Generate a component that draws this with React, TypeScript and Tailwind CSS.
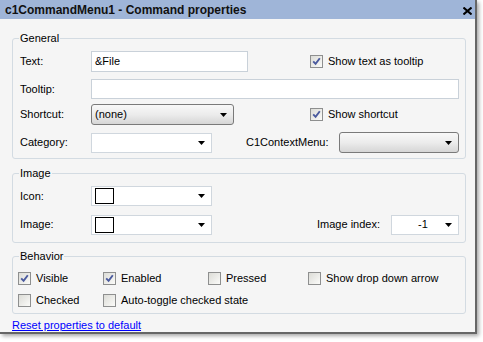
import React from 'react'

function Arrow() {
  return (
    <svg width="7" height="4" viewBox="0 0 7 4" className="shrink-0">
      <path d="M0 0h7L3.5 4z" fill="#000" />
    </svg>
  )
}

function Check({ checked }: { checked?: boolean }) {
  return (
    <span className="w-[13px] h-[13px] border border-[#8e8f8f] bg-gradient-to-br from-[#dcdcd7] to-[#fbfbf9] flex items-center justify-center shrink-0">
      {checked && (
        <svg width="9" height="9" viewBox="0 0 9 9">
          <path d="M1.2 4.3L3.6 6.8L7.8 1.2" stroke="#4a5a9e" strokeWidth="1.9" fill="none" />
        </svg>
      )}
    </span>
  )
}

function CheckLabel({ checked, label, className = '' }: { checked?: boolean; label: string; className?: string }) {
  return (
    <div className={`flex items-center gap-[5px] shrink-0 ${className}`}>
      <Check checked={checked} />
      <span>{label}</span>
    </div>
  )
}

function Combo({ w, children }: { w: string; children?: React.ReactNode }) {
  return (
    <div className={`${w} h-[20px] border border-[#d0d7de] bg-white flex items-center pl-[3px] pr-[6px] shrink-0`}>
      <div className="flex-1 flex items-center">{children}</div>
      <Arrow />
    </div>
  )
}

function Select({ w, children }: { w: string; children?: React.ReactNode }) {
  return (
    <div className={`${w} h-[21px] border border-[#7a7a7a] rounded-[3px] bg-gradient-to-b from-[#f8f8f8] via-[#ececec] to-[#d6d6d6] flex items-center pl-[3px] pr-[6px] shrink-0`}>
      <div className="flex-1">{children}</div>
      <Arrow />
    </div>
  )
}

function Swatch() {
  return <span className="w-[19px] h-[16px] border border-black bg-white block" />
}

function Label({ children }: { children: React.ReactNode }) {
  return <span className="w-[71px] shrink-0">{children}</span>
}

export default function App() {
  return (
    <div className="font-['Liberation_Sans',Arial,sans-serif] text-[11px] leading-[13px] text-black bg-white w-[483px] h-[342px]">
      <div className="w-[477px] h-[334px] bg-[#f5f5f5] border-r-2 border-b-2 border-[#666666] shadow-[2px_2px_4px_rgba(0,0,0,0.35)] flex flex-col">
        {/* title bar */}
        <div className="h-[20px] bg-[#9fb5d8] flex items-center pl-[5px] pr-[3px] pt-[2px]">
          <span className="flex-1 font-bold text-[12px] text-[#111]">c1CommandMenu1 - Command properties</span>
          <svg width="9" height="8" viewBox="0 0 9 8">
            <path d="M0.5 0.5L8.5 7.5M8.5 0.5L0.5 7.5" stroke="#000" strokeWidth="2" />
          </svg>
        </div>

        <div className="pl-[12px] flex flex-col">
          {/* General */}
          <fieldset className="mt-[13px] w-[454px] border border-[#d3dbe2] rounded-[3px] pl-[7px] pb-[5px]">
            <legend className="px-[1px] -ml-[1px]">General</legend>
            <div className="mt-[6px] h-[21px] flex items-center">
              <Label>Text:</Label>
              <div className="w-[157px] h-[21px] border border-[#c9d1d9] bg-white flex items-center px-[3px]">&amp;File</div>
              <CheckLabel checked label="Show text as tooltip" className="ml-[62px]" />
            </div>
            <div className="mt-[7px] h-[20px] flex items-center">
              <Label>Tooltip:</Label>
              <div className="w-[368px] h-[20px] border border-[#c9d1d9] bg-white" />
            </div>
            <div className="mt-[5px] h-[21px] flex items-center">
              <Label>Shortcut:</Label>
              <Select w="w-[143px]">(none)</Select>
              <CheckLabel checked label="Show shortcut" className="ml-[76px]" />
            </div>
            <div className="mt-[7px] h-[21px] flex items-center">
              <Label>Category:</Label>
              <Combo w="w-[121px]" />
              <span className="ml-[34px] w-[93px]">C1ContextMenu:</span>
              <Select w="w-[120px]" />
            </div>
          </fieldset>

          {/* Image */}
          <fieldset className="mt-[8px] w-[454px] border border-[#d3dbe2] rounded-[3px] pl-[7px] pb-[7px]">
            <legend className="px-[1px] -ml-[1px]">Image</legend>
            <div className="mt-[6px] h-[20px] flex items-center">
              <Label>Icon:</Label>
              <Combo w="w-[121px]"><Swatch /></Combo>
            </div>
            <div className="mt-[8px] h-[21px] flex items-center">
              <Label>Image:</Label>
              <Combo w="w-[121px]"><Swatch /></Combo>
              <span className="ml-[105px] w-[74px]">Image index:</span>
              <Combo w="w-[68px]"><span className="w-full text-center pl-[6px]">-1</span></Combo>
            </div>
          </fieldset>

          {/* Behavior */}
          <fieldset className="mt-[7px] w-[454px] border border-[#d3dbe2] rounded-[3px] pl-[5px] pb-[5px]">
            <legend className="px-[1px] ml-[1px]">Behavior</legend>
            <div className="mt-[7px] h-[16px] flex items-center">
              <CheckLabel checked label="Visible" className="w-[85px]" />
              <CheckLabel checked label="Enabled" className="w-[105px]" />
              <CheckLabel label="Pressed" className="w-[100px]" />
              <CheckLabel label="Show drop down arrow" />
            </div>
            <div className="mt-[6px] h-[16px] flex items-center">
              <CheckLabel label="Checked" className="w-[85px]" />
              <CheckLabel label="Auto-toggle checked state" />
            </div>
          </fieldset>

          <a href="#" className="mt-[5px] self-start text-[#0000ff] underline">Reset properties to default</a>
        </div>
      </div>
    </div>
  )
}
